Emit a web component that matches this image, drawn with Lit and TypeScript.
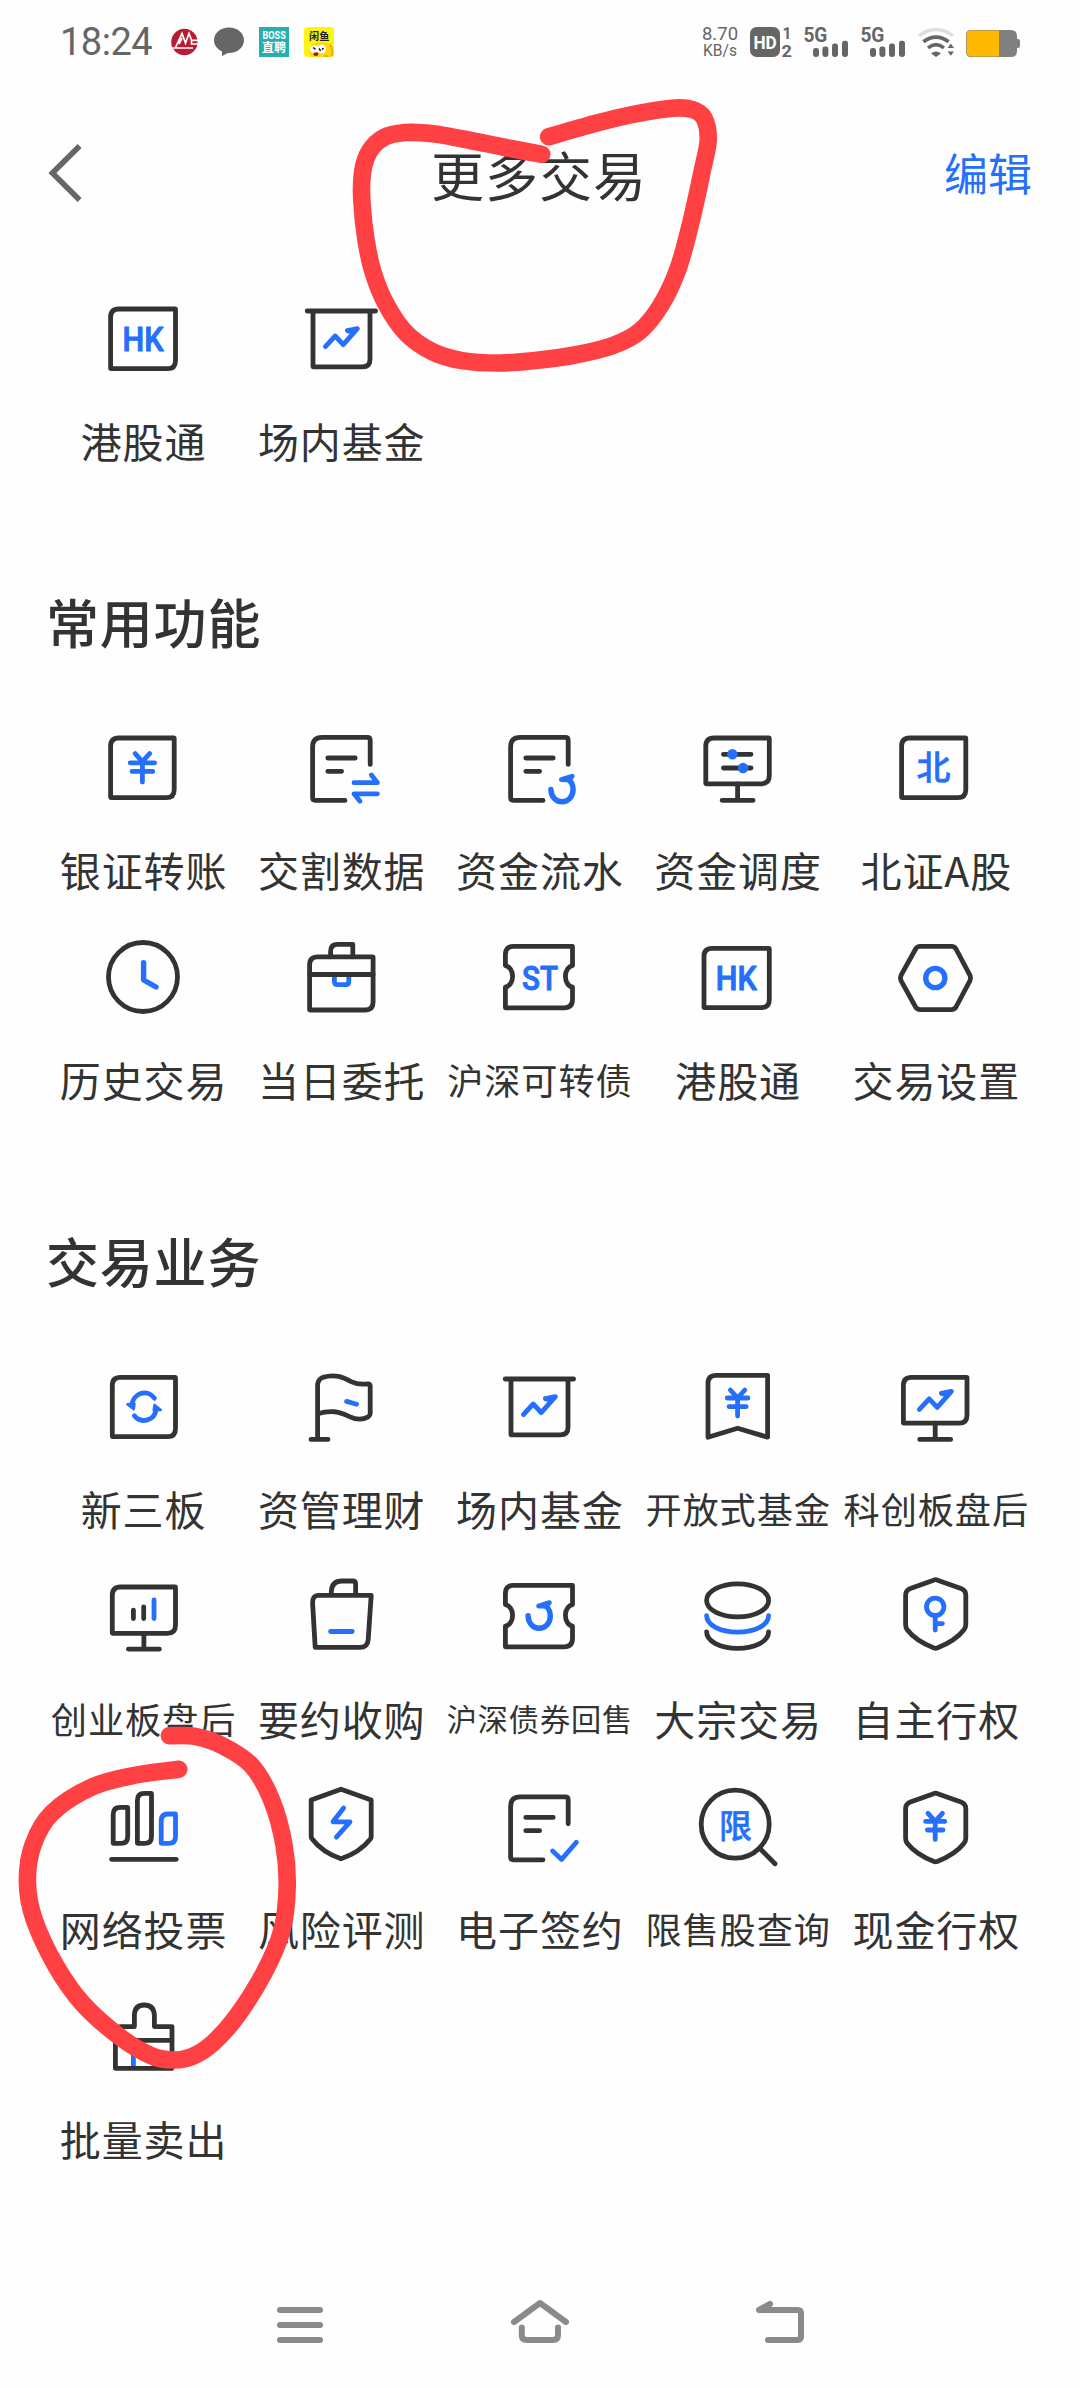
import { LitElement, html, svg, css, SVGTemplateResult } from "lit";
import { customElement, property } from "lit/decorators.js";

type Pt = [number, number];

/** Smooth open curve through the given points. */
function smooth(points: Pt[]): string {
  let d = `M${points[0][0]} ${points[0][1]}`;
  for (let i = 0; i < points.length - 1; i++) {
    const p0 = points[Math.max(i - 1, 0)];
    const p1 = points[i];
    const p2 = points[i + 1];
    const p3 = points[Math.min(i + 2, points.length - 1)];
    const c1 = [p1[0] + (p2[0] - p0[0]) / 6, p1[1] + (p2[1] - p0[1]) / 6];
    const c2 = [p2[0] - (p3[0] - p1[0]) / 6, p2[1] - (p3[1] - p1[1]) / 6];
    d += `C${c1[0].toFixed(1)} ${c1[1].toFixed(1)} ${c2[0].toFixed(1)} ${c2[1].toFixed(1)} ${p2[0]} ${p2[1]}`;
  }
  return d;
}

/** Frame with large top-left and bottom-right corners. */
const frame = (x1: number, y1: number, x2: number, y2: number, r = 8, cls = "k") =>
  svg`<path class=${cls} d="M${x1 + r} ${y1}H${x2 - 0.6}Q${x2} ${y1} ${x2} ${y1 + 0.6}V${y2 - r}Q${x2} ${y2} ${x2 - r} ${y2}H${x1 + 0.6}Q${x1} ${y2} ${x1} ${y2 - 0.6}V${y1 + r}Q${x1} ${y1} ${x1 + r} ${y1}Z"/>`;

const yen = (x: number, y: number, w = 12.2, h = 14.2) =>
  svg`<path class="b" d="M${x - 7.2} ${y - h}L${x} ${y - h + 8}L${x + 7.2} ${y - h}M${x - w} ${y - 5}H${x + w}M${x - w + 1.8} ${y + 3.6}H${x + w - 1.8}M${x} ${y - h + 8}V${y + h}"/>`;

const stand = (x: number, top: number, base: number) =>
  svg`<path class="k" d="M${x} ${top}V${base}M${x - 15.5} ${base}H${x + 15.5}"/>`;

const doc = (dy = 0) => svg`<path class="k" transform="translate(0 ${dy})"
  d="M69.2 36.4V12.4Q69.2 9.4 66.2 9.4H21Q11.6 9.4 11.6 19V69.6Q11.6 72.4 14.4 72.4H44M26.8 30H54.2M26.8 43.3H40.6"/>`;

const hk = (x: number) =>
  svg`<text class="t" x=${x} y="51.6" font-size="33" textLength="41" lengthAdjust="spacingAndGlyphs">HK</text>`;

const ticket = svg`<path class="k" d="M14.4 8.4H73.5V27.6C69.5 28.4 66.4 32.6 66.4 38.2C66.4 44 69.5 48.4 73.5 49.2V61.6Q73.5 69.8 65.3 69.8H6.4V49.2C10.4 48.4 13.6 44 13.6 38.2C13.6 32.6 10.4 28.4 6.4 27.6V16.4Q6.4 8.4 14.4 8.4Z"/>`;

const loop = (dx: number, dy: number) => svg`<g transform="translate(${dx} ${dy})">
  <path class="b w" d="M51.9 61.4C52 69 57 73.8 62.8 73.8C69.2 73.8 74.1 68.8 74.1 61.6C74.1 57 72.2 53.2 68.6 50.9"/>
  <path class="b" d="M62.4 51.6L73.2 48.2L69.6 51.8Z"/></g>`;

const board = svg`<path class="k" d="M6.2 12H74.6M12 12V67.8H61.4Q69 67.8 69 60.2V12"/>`;

const trend = (dx: number, dy: number) =>
  svg`<path class="b" transform="translate(${dx} ${dy})" d="M24.4 47.6L34.2 37L42.2 45.6L56.4 29.6L46.4 31.6L52 33.2"/>`;

const shield = (dy = 0) => svg`<path class="k" transform="translate(0 ${dy})"
  d="M37.6 3.2Q39.6 2.2 41.6 3.2L65 11.4Q69.8 13.2 69.8 18.2V47.6Q69.8 50.6 68 52.8C62 60.6 50.5 67.4 41.2 71Q39.6 71.6 38 71C28.6 67.4 17.2 60.6 11.2 52.8Q9.6 50.6 9.6 47.6V18.2Q9.6 13.2 14.4 11.4Z"/>`;

const ICONS: Record<string, SVGTemplateResult> = {
  hk: svg`${frame(7.6, 10, 72.5, 69.7)}${hk(40)}`,
  hk2: svg`${frame(6, 10.3, 71.3, 69.7)}${hk(38.3)}`,
  board: svg`${board}${trend(0, 0)}`,
  bank: svg`${frame(7.6, 10, 71.2, 69.7)}${yen(39.4, 39.8)}`,
  exchange: svg`${doc()}<path class="b" d="M53 54.7H76.4L70.4 47M76.4 65.8H53L59 73.2"/>`,
  flow: svg`${doc()}${loop(0, 0)}`,
  sliders: svg`${frame(7.8, 10, 71.3, 55.8)}${stand(39.6, 55.8, 72.3)}
    <path class="k" d="M25.4 26.3H53M25.4 40H53"/><circle class="d" cx="34.4" cy="26.3" r="5.2"/><circle class="d" cx="45" cy="40" r="5.2"/>`,
  north: svg`${frame(5.6, 10, 69.8, 69.7)}<text class="t cjk" x="37.6" y="52.4" font-size="34">北</text>`,
  clock: svg`<circle class="k" cx="40" cy="39" r="34.5"/><path class="b w" d="M40.6 24.6V42L53 49"/>`,
  briefcase: svg`${frame(8.6, 18.8, 72.1, 72)}<path class="k" d="M29.6 18.8V13.4Q29.6 6.4 36.6 6.4H51.8V18.8"/>
    <path class="b" d="M33.4 38.4V43.4Q33.4 46.6 36.6 46.6H44.6Q47.8 46.6 47.8 43.4V38.4"/><path class="k" d="M8.6 36.5H72.1"/>`,
  st: svg`${ticket}<text class="t" x="41" y="51.8" font-size="33" textLength="36" lengthAdjust="spacingAndGlyphs">ST</text>`,
  hexagon: svg`<path class="k" d="M24 8.4H55.6Q58.4 8.4 60 11L74 37.4Q75.2 40 74 42.6L60 69Q58.4 71.6 55.6 71.6H24Q21.2 71.6 19.6 69L5 42.6Q3.8 40 5 37.4L19.6 11Q21.2 8.4 24 8.4Z"/><circle class="b w" cx="39.3" cy="40" r="9.6"/>`,
  refresh: svg`${frame(9.3, 10.3, 72.5, 69.7)}
    <path class="b" d="M29 38.6A12.4 12.8 0 0 1 51.4 31.2M53.2 42.2A12.4 12.8 0 0 1 31.4 48.8"/>
    <path class="h" d="M24.4 37.2L31.6 36.6L30.8 42.2ZM57.8 43L50.6 43.4L51.6 37.8Z"/>`,
  flag: svg`<path class="k" d="M16.6 72.4V17.4Q17.2 12.4 21.8 10.4C34 6.6 42 10.2 50.2 14.6C55.4 17.2 61 17.6 66.6 16.8Q69.2 16.6 69.2 19V46.4Q69.2 48.4 67.2 49.8C61 53.4 55 52.8 48.4 49.6C38.4 44.6 30 42.6 16.6 46.8M10 72.4H27"/><path class="b" d="M45.6 34.4L55.6 37.2"/>`,
  bookmark: svg`<path class="k" d="M18 8.3H69.6V70.2L39.6 61.2L10 70.2V16.3Q10 8.3 18 8.3Z"/>${yen(39.6, 36, 10.4, 13)}`,
  monitorTrend: svg`${frame(7.4, 10.3, 71, 56.2)}${stand(39.2, 56.2, 72.4)}${trend(-1, -5.2)}`,
  monitorBars: svg`${frame(9.3, 10, 72.5, 56.3)}${stand(40.9, 56.3, 72.1)}
    <path class="k" d="M30.4 33.2V41.6M40.7 29.8V41.6"/><path class="b" d="M51 23V41.6"/>`,
  bag: svg`<path class="k" d="M17.6 18.3H70.2L67.2 62.6Q66.6 70.4 59 70.4H14.2L11.6 26.2Q11.4 18.3 17.6 18.3ZM30.3 18.3V14.6Q30.8 4 41 4H51.6Q54.6 4 54.6 7V18.3"/><path class="b" d="M29.6 54.5H51.2"/>`,
  ticketLoop: svg`${ticket}${loop(-22.8, -22.6)}`,
  coins: svg`<ellipse class="k" cx="39.6" cy="23.4" rx="31" ry="16.5"/><path class="b" d="M8.6 38.6C8.6 48 22 55.2 39.6 55.2S70.6 48 70.6 38.6"/><path class="k" d="M8.6 54.8C8.6 64.2 22 71.4 39.6 71.4S70.6 64.2 70.6 54.8"/>`,
  key: svg`${shield()}<circle class="b" cx="39.2" cy="29.8" r="8.7"/><path class="b" d="M39.2 38.5V53M39.2 46.6H46.4"/>`,
  vote: svg`${frame(10.2, 20.4, 24.7, 56.4, 7)}${frame(34.4, 6.4, 48.5, 56.4, 7)}${frame(58.2, 27, 72.5, 56.4, 7, "b")}
    <path class="k" d="M8.6 72.3H73.2"/>`,
  risk: svg`<path class="k" d="M40 2.2L70.2 13V50Q70.2 51 69.4 52C62.4 61 51 68 40 71.8C29 68 18 61 11.2 52Q10.2 51 10.2 50V13Z"/><path class="b" d="M42.6 21L32 34.8H49L35.4 50.2"/>`,
  sign: svg`${doc(0.4)}<path class="b" d="M53.6 64L62.6 72.4L77.4 55.2"/>`,
  limit: svg`<circle class="k" cx="37.2" cy="37.2" r="34"/><path class="k" d="M62.6 62.2L77 76.8"/><text class="t cjk" x="37.6" y="50.6" font-size="33">限</text>`,
  cash: svg`${shield(3.5)}${yen(39.2, 39.4, 9.6, 13)}`,
  sell: svg`<path class="b" d="M30.4 54V70M51 54V70"/><path class="k" d="M18 29.6H31.4V18Q31.8 8 41.2 8Q50.8 8 51.4 18V29.6H69V71.3H12.4V35Q12.4 29.6 18 29.6ZM12.4 43.3H69"/>`,
};

@customElement("fn-item")
class FnItem extends LitElement {
  @property() icon = "";
  @property() label = "";

  static styles = css`
    :host {
      display: flex;
      flex-direction: column;
      align-items: center;
      height: 210px;
    }
    .icon { display: block; width: 80px; height: 80px; overflow: visible; }
    .k, .b { fill: none; stroke: #333; stroke-width: 4.8; stroke-linecap: round; stroke-linejoin: round; }
    .b { stroke: #246ffb; }
    .w { stroke-width: 5.4; }
    .d { fill: #246ffb; }
    .h { fill: #246ffb; stroke: #246ffb; stroke-width: 2.4; stroke-linejoin: round; }
    .t {
      fill: #246ffb; stroke: #246ffb; stroke-width: 1; stroke-linejoin: round;
      text-anchor: middle; font-family: Roboto, sans-serif; font-weight: 500;
    }
    .cjk { font-family: "Noto Sans CJK SC", sans-serif; stroke-width: 0.5; }
    .label {
      margin-top: 31px; height: 60px; line-height: 60px; white-space: nowrap;
      font-size: 41px; letter-spacing: 0.9px; margin-right: -0.9px; color: #333;
    }
    .len5 { font-size: 36.2px; }
    .len6 { font-size: 30.2px; }
  `;

  render() {
    const size = this.label.includes("A") ? 4 : this.label.length;
    return html`<svg class="icon" viewBox="0 0 80 80">${ICONS[this.icon]}</svg>
      <span class="label len${size}">${this.label}</span>`;
  }
}

const PINNED = [["hk", "港股通"], ["board", "场内基金"]];

const SECTIONS = [
  {
    title: "常用功能",
    items: [
      ["bank", "银证转账"], ["exchange", "交割数据"], ["flow", "资金流水"], ["sliders", "资金调度"], ["north", "北证A股"],
      ["clock", "历史交易"], ["briefcase", "当日委托"], ["st", "沪深可转债"], ["hk2", "港股通"], ["hexagon", "交易设置"],
    ],
  },
  {
    title: "交易业务",
    items: [
      ["refresh", "新三板"], ["flag", "资管理财"], ["board", "场内基金"], ["bookmark", "开放式基金"], ["monitorTrend", "科创板盘后"],
      ["monitorBars", "创业板盘后"], ["bag", "要约收购"], ["ticketLoop", "沪深债券回售"], ["coins", "大宗交易"], ["key", "自主行权"],
      ["vote", "网络投票"], ["risk", "风险评测"], ["sign", "电子签约"], ["limit", "限售股查询"], ["cash", "现金行权"],
      ["sell", "批量卖出"],
    ],
  },
];

const TITLE_MARK: Pt[] = [
  [541.7, 154.3], [503, 147], [463, 139], [433, 133.8], [405, 132.6], [383, 138], [369, 152], [362.6, 172], [361.8, 200],
  [366, 240], [373, 272], [386, 304], [406, 333], [432, 351.5], [462, 360.6], [500, 363], [535, 360.4], [575, 355],
  [613, 345.5], [640, 331], [661, 305], [678, 269], [691, 222], [702, 172], [708.2, 140], [704, 118],
  [692, 109.4], [672, 108.2], [630, 115], [588, 125.4], [563, 132.6], [548.7, 136.7],
];

const VOTE_MARK: Pt[] = [
  [169.4, 1735.7], [195, 1736.4], [223, 1746], [252, 1766], [272, 1801], [284, 1845], [287.2, 1886], [282, 1930],
  [264, 1973], [237, 2016], [213, 2043], [192, 2056.6], [172, 2060], [151, 2055.6], [120, 2037], [83, 2004],
  [56, 1966], [34, 1919], [27.4, 1882], [33, 1845], [52, 1813], [93, 1786.6], [136, 1775], [178.7, 1769.3],
];

@customElement("app-root")
class AppRoot extends LitElement {
  static styles = css`
    :host {
      display: block; position: relative; width: 1080px; height: 2388px; overflow: hidden;
      background: #fefefe; color: #333; font-family: "Noto Sans CJK SC", sans-serif;
    }
    .page { display: flex; flex-direction: column; height: 100%; }
    svg { display: block; overflow: visible; flex: none; }
    .status {
      display: flex; justify-content: space-between; box-sizing: border-box; height: 87px;
      padding: 27px 60px 30px 60px; color: #666; font-family: Roboto, sans-serif;
    }
    .side { display: flex; align-items: flex-start; height: 30px; }
    .time { width: 94px; margin-right: 17px; font-size: 38px; line-height: 31px; font-weight: 400; letter-spacing: -0.5px; }
    .cmb { margin-right: 16px; }
    .gap { margin-right: 15px; }
    .speed {
      display: flex; flex-direction: column; align-items: center; width: 38px; margin-right: 11px;
      font-size: 18.5px; line-height: 15px;
    }
    .unit { font-size: 15.6px; line-height: 18px; }
    .hd { margin-right: 12px; }
    .wifi { margin-right: 12px; }
    .sim { margin-right: 12px; }
    .g { fill: #666; }
    .gs { fill: none; stroke: #666; stroke-width: 3.6; }
    .faint { stroke: #dedede; }
    .st { font-family: Roboto, sans-serif; font-weight: 700; }
    .zh { font-family: "Noto Sans CJK SC", sans-serif; font-weight: 700; }
    .header {
      display: grid; grid-template-columns: 1fr auto 1fr; align-items: center; height: 174px;
      padding: 0 48px 0 48px; margin-bottom: 38px;
    }
    .title { margin-left: -2px; font-size: 53px; letter-spacing: 1px; line-height: 80px; }
    .edit { justify-self: end; margin-top: -4px; font-size: 44px; line-height: 66px; color: #246ffb; }
    .back { margin-top: -2px; fill: none; stroke: #666; stroke-width: 5.6; }
    .grid { display: grid; grid-template-columns: repeat(5, 198.2px); padding: 0 44px; }
    .heading {
      margin: 77px 0 72px 46px; height: 70px; line-height: 70px;
      font-size: 53px; letter-spacing: 0.8px; font-weight: 500;
    }
    .nav { display: flex; justify-content: space-between; margin-top: auto; padding: 0 276px 45px 277px; }
    .nav svg { fill: none; stroke: #8a8a8a; stroke-width: 6; stroke-linecap: round; stroke-linejoin: round; }
    .marks {
      position: absolute; left: 0; top: 0; width: 1080px; height: 2388px; pointer-events: none;
      fill: none; stroke: #ff4143; stroke-width: 17.6; stroke-linecap: round; stroke-linejoin: round;
    }
  `;

  private items(list: string[][]) {
    return html`<div class="grid">
      ${list.map(([icon, label]) => html`<fn-item .icon=${icon} .label=${label}></fn-item>`)}
    </div>`;
  }

  private signal() {
    return html`<svg class="sim" width="45" height="30" viewBox="0 0 45 30">
      <text class="g st" x="-0.6" y="14.8" font-size="20" textLength="24" lengthAdjust="spacingAndGlyphs">5G</text>
      <rect class="g" x="9" y="21" width="6" height="9" rx="2.4" /><rect class="g" x="18.4" y="19.6" width="6" height="10.4" rx="2.4" />
      <rect class="g" x="28" y="16.6" width="6" height="13.4" rx="2.4" /><rect class="g" x="38" y="13.8" width="6" height="16.2" rx="2.4" />
    </svg>`;
  }

  render() {
    return html`
      <div class="page">
        <div class="status">
          <div class="side">
            <span class="time">18:24</span>
            <svg class="cmb" width="27" height="30" viewBox="0 0 27 30">
              <circle cx="13.4" cy="15" r="13.2" fill="#b81c34" />
              <path d="M4.5 20.5L11 6.5L14.5 16L18 6.5L21 14.5M8 17L11 11M27 13.4H20.5V17H27M1.6 21H22" fill="none" stroke="#fff" stroke-width="1.7" />
            </svg>
            <svg class="gap" width="30" height="30" viewBox="0 0 30 30">
              <path class="g" d="M15 0.5C23.4 0.5 30 6 30 13.2S23.4 26 15 26C13 26 11 27.6 8 29V24.4C3 22 0 18 0 13.2C0 6 6.6 0.5 15 0.5Z" />
            </svg>
            <svg class="gap" width="30" height="30" viewBox="0 0 30 30">
              <rect width="30" height="30" fill="#25b0ad" />
              <text class="st" x="3.4" y="12" font-size="10" textLength="23.4" lengthAdjust="spacingAndGlyphs" fill="#fff">BOSS</text>
              <text class="zh" x="3" y="25.2" font-size="12" fill="#fff">直聘</text>
            </svg>
            <svg width="30" height="30" viewBox="0 0 30 30">
              <rect width="30" height="30" rx="3.5" fill="#fff312" />
              <path d="M8 30C3 27 5 18 11 15.8C18 13 27 16 28 23L28 30Z" fill="#ffd70a" />
              <path d="M26 17Q29.5 22 28 29M20 29H24" fill="none" stroke="#f2a900" stroke-width="1.8" />
              <ellipse cx="10.4" cy="22.4" rx="4.4" ry="3.8" fill="#fff" /><ellipse cx="17.6" cy="22" rx="4.4" ry="4.6" fill="#fff" />
              <path d="M9 20.5L11.6 22.4M15 21.4L16.6 24M18 22.6L19.6 21" stroke="#222" stroke-width="1.5" />
              <rect x="9.6" y="25.4" width="4.6" height="3.4" rx="1.4" fill="#8a1b10" />
              <text class="zh" x="5" y="12.8" font-size="10.2" fill="#222">闲鱼</text>
            </svg>
          </div>
          <div class="side">
            <div class="speed"><span>8.70</span><span class="unit">KB/s</span></div>
            <svg class="hd" width="42" height="30" viewBox="0 0 42 30">
              <rect class="g" width="30" height="30" rx="6.5" />
              <text class="st" x="3.4" y="21.6" font-size="18.5" textLength="23.4" lengthAdjust="spacingAndGlyphs" fill="#fff">HD</text>
              <text class="g st" x="32.4" y="12" font-size="17" textLength="9" lengthAdjust="spacingAndGlyphs">1</text>
              <text class="g st" x="31.6" y="29.6" font-size="17" textLength="10.4" lengthAdjust="spacingAndGlyphs">2</text>
            </svg>
            ${this.signal()}${this.signal()}
            <svg class="wifi" width="36" height="30" viewBox="0 0 36 30">
              <path class="gs faint" d="M1.2 8.6Q18 -3.6 34.8 8.6" />
              <path class="gs" d="M5.4 14.8Q18 5.4 30.6 14.8M10 20.8Q18 14.6 26 20.8" />
              <path class="g" d="M13 26.4Q18 22.8 23 26.4L18 30ZM29.6 21L32.8 16.6L36 21ZM29.6 24.4H36L32.8 28.8Z" />
            </svg>
            <svg width="54" height="30" viewBox="0 0 54 30">
              <path d="M5 3H45Q51 3 51 9V12H52.4Q54 12.4 54 14V19Q54 20.6 52.4 21H51V24Q51 30 45 30H5Q0 30 0 25V8Q0 3 5 3Z" fill="#808080" />
              <path d="M5.4 3.6H33V29.4H5.4Q0.6 29.4 0.6 24.8V8.2Q0.6 3.6 5.4 3.6Z" fill="#ffb900" />
            </svg>
          </div>
        </div>
        <div class="header">
          <svg class="back" width="33" height="58" viewBox="0 0 33 58"><path d="M31.6 2L4.4 29L31.6 56" /></svg>
          <span class="title">更多交易</span>
          <span class="edit">编辑</span>
        </div>
        ${this.items(PINNED)}
        ${SECTIONS.map((s) => html`<div class="heading">${s.title}</div>${this.items(s.items)}`)}
        <div class="nav">
          <svg width="46" height="43" viewBox="0 0 46 43"><path d="M3 10H43M3 25H43M3 40H43" /></svg>
          <svg width="58" height="43" viewBox="0 0 58 43"><path d="M3 22L29 3L55 22M10.8 27.6V35Q10.8 40 15.8 40H42Q47 40 47 35V27.6" /></svg>
          <svg width="48" height="43" viewBox="0 0 48 43"><path d="M14 4L3 10H41.6Q45 10 45 13.4V36.6Q45 40 41.6 40H12" /></svg>
        </div>
      </div>
      <svg class="marks" viewBox="0 0 1080 2388">
        <path d=${smooth(TITLE_MARK)} /><path d=${smooth(VOTE_MARK)} />
      </svg>
    `;
  }
}
